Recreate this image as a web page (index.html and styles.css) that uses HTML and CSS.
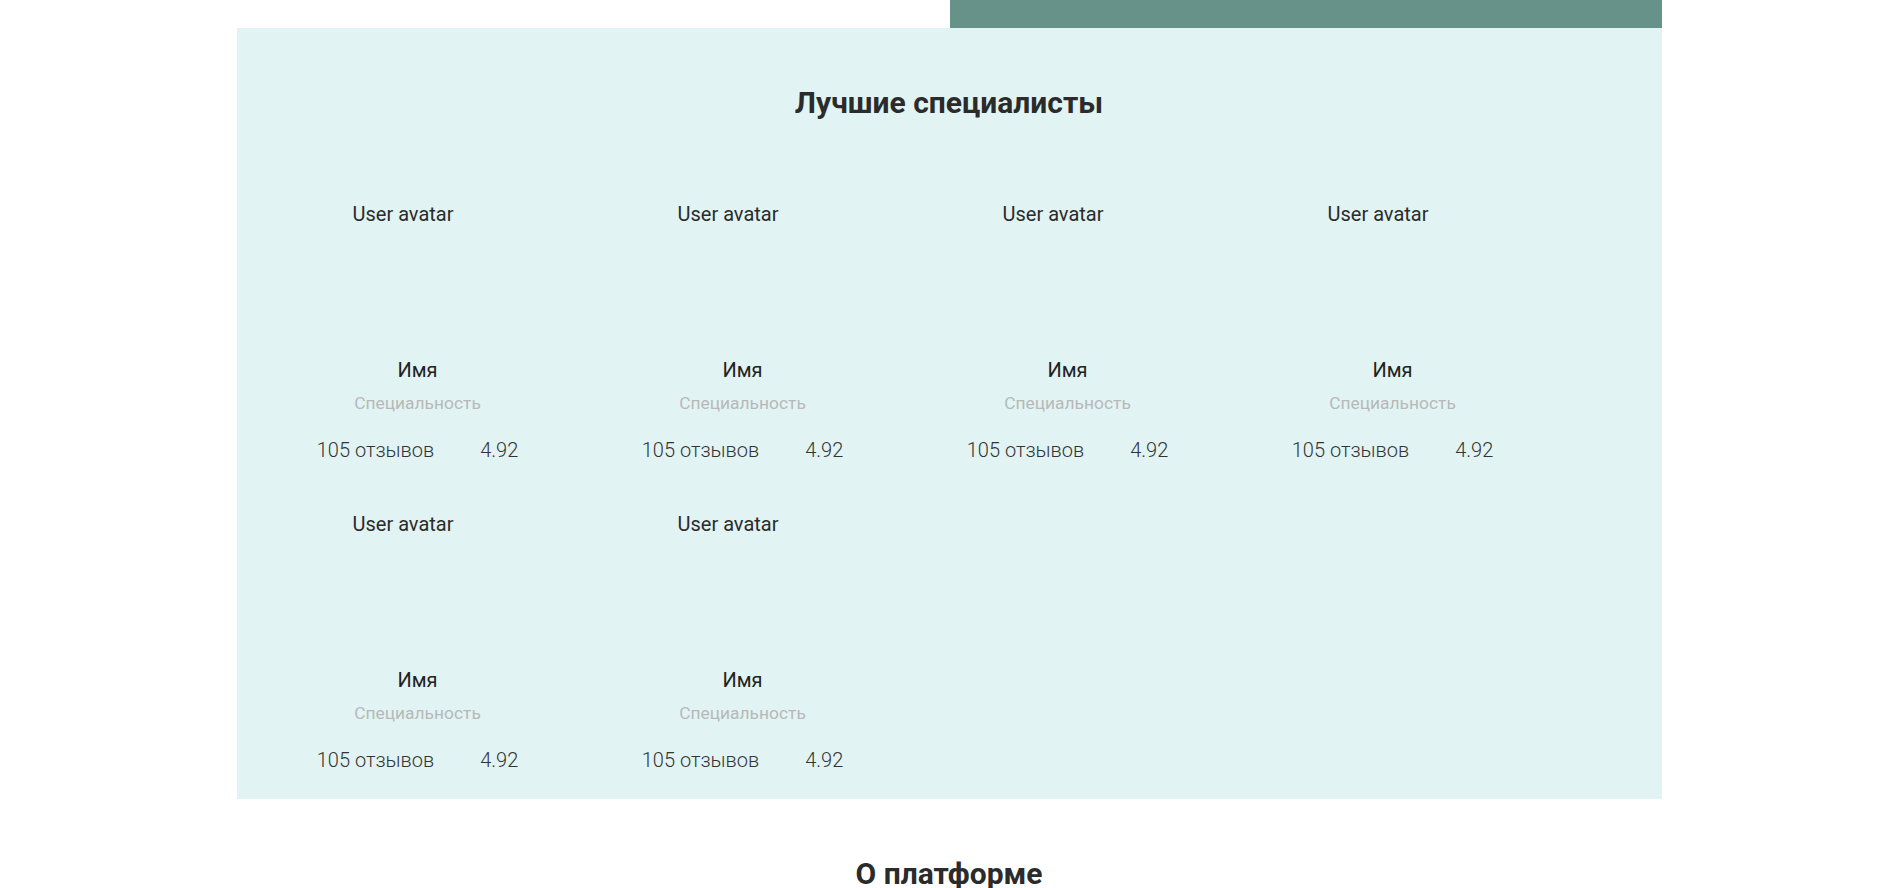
FILE: index.html
```html
<!DOCTYPE html>
<html lang="ru">
<head>
<meta charset="utf-8">
<title>Лучшие специалисты</title>
<link rel="stylesheet" href="styles.css">
</head>
<body>
<div class="page">
  <div class="top-strip"><div class="top-strip__accent"></div></div>
  <section class="specialists">
    <h2 class="section-title">Лучшие специалисты</h2>
    <div class="cards">
      <div class="card">
        <div class="avatar">User avatar</div>
        <div class="name">Имя</div>
        <div class="spec">Специальность</div>
        <div class="stats"><span>105 отзывов</span><span>4.92</span></div>
      </div>
      <div class="card">
        <div class="avatar">User avatar</div>
        <div class="name">Имя</div>
        <div class="spec">Специальность</div>
        <div class="stats"><span>105 отзывов</span><span>4.92</span></div>
      </div>
      <div class="card">
        <div class="avatar">User avatar</div>
        <div class="name">Имя</div>
        <div class="spec">Специальность</div>
        <div class="stats"><span>105 отзывов</span><span>4.92</span></div>
      </div>
      <div class="card">
        <div class="avatar">User avatar</div>
        <div class="name">Имя</div>
        <div class="spec">Специальность</div>
        <div class="stats"><span>105 отзывов</span><span>4.92</span></div>
      </div>
      <div class="card">
        <div class="avatar">User avatar</div>
        <div class="name">Имя</div>
        <div class="spec">Специальность</div>
        <div class="stats"><span>105 отзывов</span><span>4.92</span></div>
      </div>
      <div class="card">
        <div class="avatar">User avatar</div>
        <div class="name">Имя</div>
        <div class="spec">Специальность</div>
        <div class="stats"><span>105 отзывов</span><span>4.92</span></div>
      </div>
    </div>
  </section>
  <section class="about">
    <h2 class="section-title">О платформе</h2>
  </section>
</div>
</body>
</html>
```
FILE: styles.css
```css
* { box-sizing: border-box; }
html, body { margin: 0; padding: 0; }
body {
  font-family: Roboto, "Liberation Sans", Arial, sans-serif;
  color: #2b2b2b;
  background: #ffffff;
  overflow: hidden;
}
.page {
  width: 1425px;
  margin: 0 auto;
}
.top-strip {
  display: flex;
  justify-content: flex-end;
  height: 28px;
}
.top-strip__accent {
  width: 712px;
  background: #66928a;
}
.specialists {
  background: #e1f4f3;
  padding: 57px 0 27px;
}
.section-title {
  margin: 0;
  text-align: center;
  font-size: 30px;
  font-weight: 700;
  line-height: 35px;
  color: #2b2b2b;
}
.cards {
  margin-top: 83px;
  padding-left: 71px;
  display: grid;
  grid-template-columns: repeat(4, 220px);
  column-gap: 105px;
  row-gap: 51px;
}
.card {
  display: flex;
  flex-direction: column;
  align-items: center;
  text-align: center;
}
.avatar {
  width: 130px;
  height: 150px;
  margin-bottom: 6px;
  font-size: 20px;
  line-height: 23px;
  text-align: left;
  color: #2b2b2b;
}
.name {
  font-size: 20px;
  line-height: 23px;
  color: #222;
}
.spec {
  margin-top: 11px;
  font-size: 17.4px;
  line-height: 20px;
  color: #b8b8b8;
}
.stats {
  margin-top: 26px;
  display: flex;
  gap: 46px;
  font-size: 20px;
  line-height: 23px;
  font-weight: 300;
  color: #333;
  white-space: nowrap;
}
.about {
  padding-top: 57px;
}
```
